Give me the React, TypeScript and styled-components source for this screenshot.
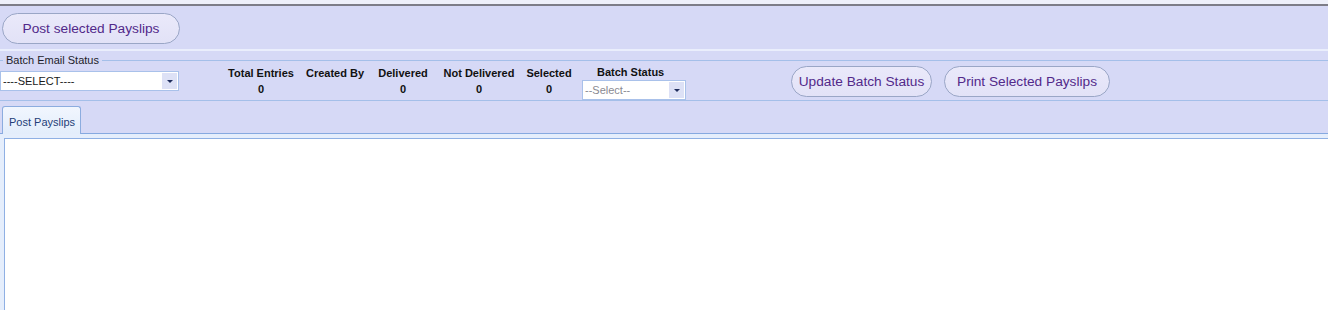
import React from "react";
import styled, { createGlobalStyle } from "styled-components";

const GlobalStyle = createGlobalStyle`
  html, body {
    margin: 0;
    padding: 0;
    background: #ffffff;
    font-family: "Liberation Sans", Arial, sans-serif;
  }
`;

const Page = styled.div`
  width: 100%;
  height: 310px;
  display: flex;
  flex-direction: column;
  overflow: hidden;
  background: #d6d9f6;
`;

const TopEdge = styled.div`
  height: 4px;
  background: #eef0fa;
  border-bottom: 2px solid #7d7d88;
`;

const Toolbar = styled.div`
  height: 45px;
  display: flex;
  align-items: flex-start;
  padding: 7px 0 0 2px;
  box-sizing: border-box;
  border-bottom: 2px solid #eaeefc;
`;

const PillButton = styled.button<{ $width: number }>`
  width: ${(p) => p.$width}px;
  height: 31px;
  border-radius: 16px;
  border: 1px solid #9aa6c6;
  background: linear-gradient(#eae9fa, #e2e2f7);
  color: #52298a;
  font-family: "Liberation Sans", Arial, sans-serif;
  font-size: 13.7px;
  padding: 0;
  cursor: pointer;
`;

const Group = styled.fieldset`
  margin: 3px 0 0 0;
  padding: 0;
  min-width: 0;
  border: none;
  border-top: 1px solid #a4bfe9;
  border-bottom: 1px solid #a4bfe9;
  height: 47px;
  box-sizing: border-box;
`;

const Legend = styled.legend`
  margin-left: 3px;
  padding: 0 3px;
  font-family: "Liberation Sans", Tahoma, sans-serif;
  font-size: 11px;
  line-height: 13px;
  color: #1d1d2a;
`;

const GroupRow = styled.div`
  display: flex;
  align-items: flex-start;
`;

const SelectBox = styled.div<{ $width: number; $muted?: boolean }>`
  width: ${(p) => p.$width}px;
  height: 20px;
  box-sizing: border-box;
  background: #ffffff;
  border: 1px solid #a9c1ea;
  display: flex;
  align-items: center;
  justify-content: space-between;
  font-family: "Liberation Sans", Tahoma, sans-serif;
  font-size: 11px;
  color: ${(p) => (p.$muted ? "#8a8a92" : "#1a1a1a")};
  padding-left: 2px;
`;

const MainSelect = styled(SelectBox)`
  margin-top: 4px;
`;

const DropButton = styled.span`
  width: 15px;
  height: 16px;
  margin-right: 1px;
  background: #dde1f6;
  display: flex;
  align-items: center;
  justify-content: center;
`;

const Arrow = styled.span`
  width: 0;
  height: 0;
  border-left: 3px solid transparent;
  border-right: 3px solid transparent;
  border-top: 3px solid #1f2d5c;
`;

const Stats = styled.div`
  display: flex;
  margin-left: 45px;
  margin-top: -2px;
`;

const Stat = styled.div<{ $width: number }>`
  width: ${(p) => p.$width}px;
  display: flex;
  flex-direction: column;
  align-items: center;
  font-family: "Liberation Sans", Tahoma, sans-serif;
  font-weight: bold;
  font-size: 11px;
  line-height: 16px;
  color: #111;
  white-space: nowrap;
`;

const StatusCol = styled.div`
  margin-left: 8px;
  margin-top: -2px;
  display: flex;
  flex-direction: column;
`;

const StatusLabel = styled.div`
  font-family: "Liberation Sans", Tahoma, sans-serif;
  font-weight: bold;
  font-size: 11px;
  line-height: 15px;
  color: #111;
  padding-left: 15px;
`;

const Actions = styled.div`
  display: flex;
  gap: 12px;
  margin-left: 105px;
  margin-top: -1px;
`;

const TabStrip = styled.div`
  height: 33px;
  display: flex;
  align-items: flex-end;
  padding-left: 2px;
  box-sizing: border-box;
  border-bottom: 1px solid #86a9e0;
`;

const Tab = styled.div`
  width: 79px;
  height: 28px;
  box-sizing: border-box;
  margin-bottom: -1px;
  border: 1px solid #8cacdf;
  border-bottom: none;
  border-radius: 3px 3px 0 0;
  background: linear-gradient(#f1f6fe, #e3edfb);
  font-family: "Liberation Sans", Tahoma, sans-serif;
  font-size: 11px;
  color: #233d78;
  padding: 9px 0 0 6px;
  white-space: nowrap;
  position: relative;
  z-index: 1;
`;

const Panel = styled.div`
  flex: 1;
  background: #e5eefc;
  padding: 4px 0 0 4px;
`;

const PanelBody = styled.div`
  height: 100%;
  background: #ffffff;
  border-top: 1px solid #8fb0e4;
  border-left: 1px solid #8fb0e4;
`;

const stats = [
  { label: "Total Entries", value: "0", width: 74 },
  { label: "Created By", value: "", width: 74 },
  { label: "Delivered", value: "0", width: 62 },
  { label: "Not Delivered", value: "0", width: 90 },
  { label: "Selected", value: "0", width: 50 },
];

export default function App() {
  return (
    <Page>
      <GlobalStyle />
      <TopEdge />
      <Toolbar>
        <PillButton $width={178}>Post selected Payslips</PillButton>
      </Toolbar>
      <Group>
        <Legend>Batch Email Status</Legend>
        <GroupRow>
          <MainSelect $width={179}>
            ----SELECT----
            <DropButton>
              <Arrow />
            </DropButton>
          </MainSelect>
          <Stats>
            {stats.map((s) => (
              <Stat key={s.label} $width={s.width}>
                <span>{s.label}</span>
                <span>{s.value || "\u00a0"}</span>
              </Stat>
            ))}
          </Stats>
          <StatusCol>
            <StatusLabel>Batch Status</StatusLabel>
            <SelectBox $width={104} $muted>
              --Select--
              <DropButton>
                <Arrow />
              </DropButton>
            </SelectBox>
          </StatusCol>
          <Actions>
            <PillButton $width={141}>Update Batch Status</PillButton>
            <PillButton $width={166}>Print Selected Payslips</PillButton>
          </Actions>
        </GroupRow>
      </Group>
      <TabStrip>
        <Tab>Post Payslips</Tab>
      </TabStrip>
      <Panel>
        <PanelBody />
      </Panel>
    </Page>
  );
}
